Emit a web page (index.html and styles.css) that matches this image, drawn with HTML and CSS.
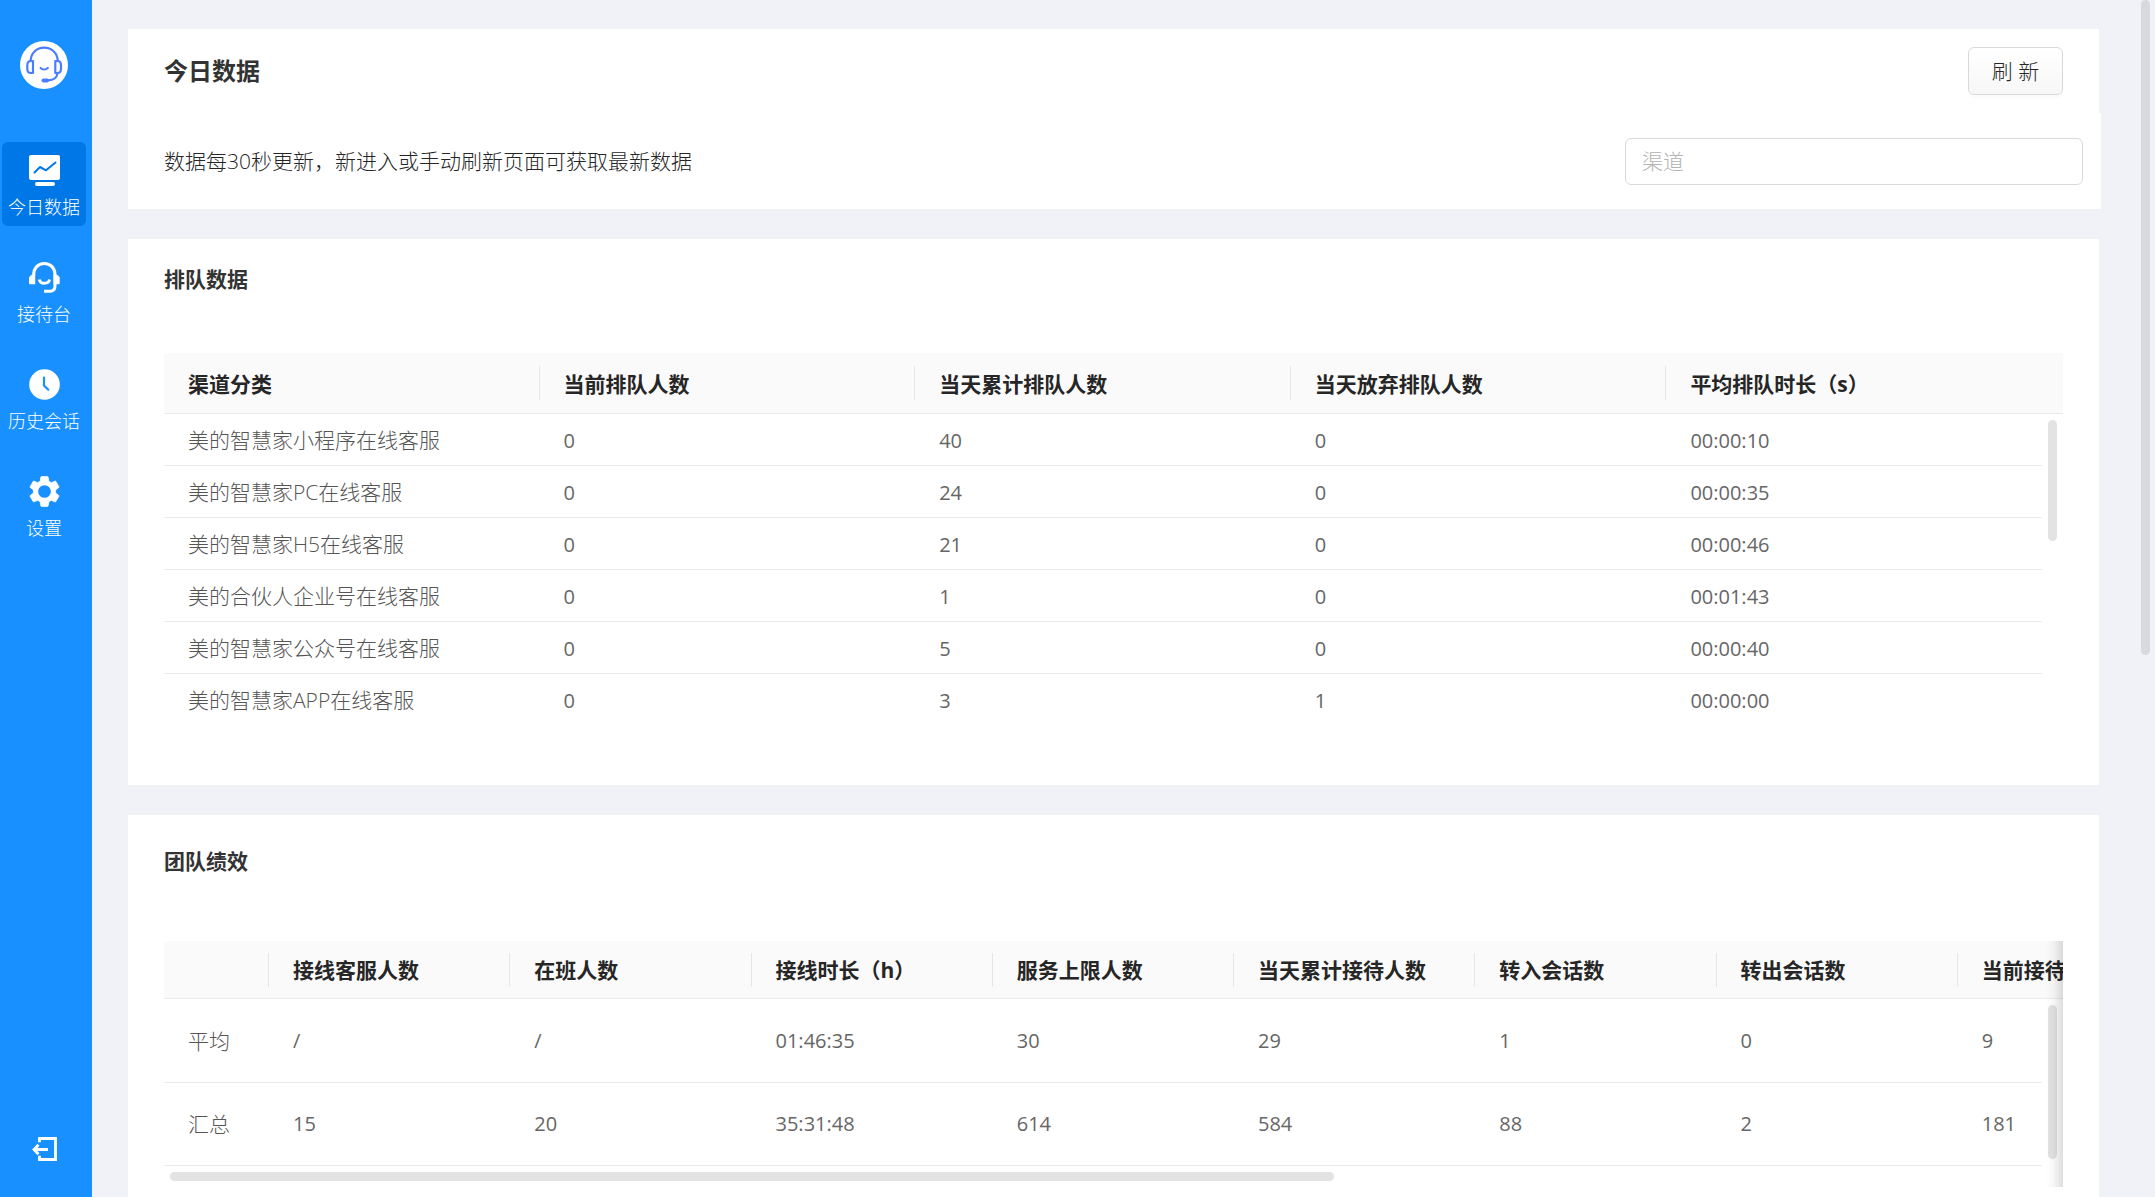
FILE: index.html
```html
<!DOCTYPE html>
<html lang="zh-CN">
<head>
<meta charset="utf-8">
<title>今日数据</title>
<link rel="stylesheet" href="styles.css">
</head>
<body>
<div class="app">
  <aside class="sidebar">
    <svg class="logo" viewBox="0 0 48 48" aria-hidden="true">
      <circle cx="24" cy="24" r="24" fill="#fff"/>
      <g fill="none" stroke="#4a7dff" stroke-width="2.2" stroke-linecap="round" stroke-linejoin="round">
        <path d="M10.700 19.500C11 12 16.800 6.700 24.200 6.700s13.200 5.300 13.500 12.800"/>
        <path d="M13 20h-2c-2.400 0-3.700 1.900-3.700 4.200v3.500c0 2.400 1.300 4.300 3.700 4.300h2z"/>
        <path d="M35.300 20h2c2.400 0 3.700 1.900 3.700 4.200v3.500c0 2.400-1.300 4.300-3.700 4.300h-2z"/>
        <path d="M37.300 32c0 4.800-4 7.200-9 7.400"/>
        <path d="M20.600 27c2 2 5.200 2 7.200 0"/>
        <path d="M23.500 39.400h3.500" stroke-width="4"/>
      </g>
    </svg>
    <nav class="menu">
      <a class="menu-item active" href="#today">
        <svg class="menu-icon" viewBox="0 0 31 31" aria-hidden="true">
          <rect width="31" height="25" rx="2" fill="#fff"/>
          <rect x="6" y="27" width="20" height="4" rx="2" fill="#fff"/>
          <path d="M5.500 17.500l5.500-5.500 6 3.300 9.500-7.800" fill="none" stroke="#0077e6" stroke-width="2" stroke-linecap="round" stroke-linejoin="round"/>
        </svg>
        <span>今日数据</span>
      </a>
      <a class="menu-item" href="#desk">
        <svg class="menu-icon" viewBox="0 0 31 31" aria-hidden="true">
          <g fill="none" stroke="#fff" stroke-width="3">
            <path d="M4.700 14v-1.200C4.700 6 9 1.500 15.300 1.500S26 6 26 12.800V24c0 3.500-1.800 5.200-5 5.200h-6"/>
            <path d="M10.300 17.500c1 5 9.200 5 10.300 0"/>
          </g>
          <path d="M6.200 12.700v9.500H1.500C.5 22.200 0 21.700 0 20.700v-5.500l2.500-2.500zM24.500 12.700v9.500h4.700c1 0 1.500-.5 1.500-1.500v-5.500l-2.500-2.500z" fill="#fff"/>
        </svg>
        <span>接待台</span>
      </a>
      <a class="menu-item" href="#history">
        <svg class="menu-icon" viewBox="0 0 31 31" aria-hidden="true">
          <circle cx="15.500" cy="15.500" r="15.300" fill="#fff"/>
          <path d="M15 8.700V16.500l4.300 4.200" fill="none" stroke="#1890ff" stroke-width="2.200" stroke-linecap="round"/>
        </svg>
        <span>历史会话</span>
      </a>
      <a class="menu-item" href="#settings">
        <svg class="menu-icon" viewBox="2 2 20 20" aria-hidden="true">
          <path fill="#fff" stroke="#fff" stroke-width=".5" d="M19.140 12.940c.04-.3.06-.61.06-.94 0-.32-.02-.64-.07-.94l2.030-1.580c.18-.14.23-.41.12-.61l-1.920-3.320c-.12-.22-.37-.29-.59-.22l-2.390.96c-.5-.38-1.030-.7-1.620-.94l-.36-2.540c-.04-.24-.24-.41-.48-.41h-3.840c-.24 0-.43.17-.47.41l-.36 2.540c-.59.24-1.130.57-1.620.94l-2.390-.96c-.22-.08-.47 0-.59.22L2.740 8.870c-.12.21-.08.47.12.61l2.030 1.580c-.05.3-.09.63-.09.94s.02.64.07.94l-2.030 1.580c-.18.14-.23.41-.12.61l1.920 3.320c.12.22.37.29.59.22l2.390-.96c.5.38 1.030.7 1.620.94l.36 2.540c.05.24.24.41.48.41h3.840c.24 0 .44-.17.47-.41l.36-2.540c.59-.24 1.130-.56 1.620-.94l2.390.96c.22.08.47 0 .59-.22l1.920-3.320c.12-.22.07-.47-.12-.61z"/>
          <circle cx="12" cy="12" r="4.100" fill="#1890ff"/>
        </svg>
        <span>设置</span>
      </a>
    </nav>
    <button class="logout" type="button" aria-label="退出">
      <svg viewBox="0 0 25 24" aria-hidden="true">
        <path d="M7.500 5.300V1.500h16v21h-16v-3.800M16 12.500H2.500M6.500 7.800L2 12.500l4.500 4.700" fill="none" stroke="#fff" stroke-width="2.800"/>
      </svg>
    </button>
  </aside>

  <main class="content">
    <section class="card">
      <header class="page-head">
        <h1>今日数据</h1>
        <button class="refresh" type="button">刷 新</button>
      </header>
      <div class="filter">
        <label for="channel">数据每30秒更新，新进入或手动刷新页面可获取最新数据</label>
        <input id="channel" type="text" placeholder="渠道">
      </div>
    </section>

    <section class="card queue">
      <h2>排队数据</h2>
      <div class="table-box queue-box">
        <table class="queue-table">
          <colgroup><col><col><col><col><col><col class="bar-col"></colgroup>
          <thead>
            <tr><th>渠道分类</th><th>当前排队人数</th><th>当天累计排队人数</th><th>当天放弃排队人数</th><th>平均排队时长（s）</th><th></th></tr>
          </thead>
          <tbody>
            <tr><td>美的智慧家小程序在线客服</td><td class="num">0</td><td class="num">40</td><td class="num">0</td><td class="num">00:00:10</td></tr>
            <tr><td>美的智慧家PC在线客服</td><td class="num">0</td><td class="num">24</td><td class="num">0</td><td class="num">00:00:35</td></tr>
            <tr><td>美的智慧家H5在线客服</td><td class="num">0</td><td class="num">21</td><td class="num">0</td><td class="num">00:00:46</td></tr>
            <tr><td>美的合伙人企业号在线客服</td><td class="num">0</td><td class="num">1</td><td class="num">0</td><td class="num">00:01:43</td></tr>
            <tr><td>美的智慧家公众号在线客服</td><td class="num">0</td><td class="num">5</td><td class="num">0</td><td class="num">00:00:40</td></tr>
            <tr><td>美的智慧家APP在线客服</td><td class="num">0</td><td class="num">3</td><td class="num">1</td><td class="num">00:00:00</td></tr>
          </tbody>
        </table>
        <div class="thumb queue-thumb"></div>
      </div>
    </section>

    <section class="card team">
      <h2>团队绩效</h2>
      <div class="table-box team-box">
        <table class="team-table">
          <colgroup><col class="name-col"><col><col><col><col><col><col><col><col></colgroup>
          <thead>
            <tr><th></th><th>接线客服人数</th><th>在班人数</th><th>接线时长（h）</th><th>服务上限人数</th><th>当天累计接待人数</th><th>转入会话数</th><th>转出会话数</th><th>当前接待人数</th></tr>
          </thead>
          <tbody>
            <tr><td>平均</td><td class="num">/</td><td class="num">/</td><td class="num">01:46:35</td><td class="num">30</td><td class="num">29</td><td class="num">1</td><td class="num">0</td><td class="num">9</td></tr>
            <tr><td>汇总</td><td class="num">15</td><td class="num">20</td><td class="num">35:31:48</td><td class="num">614</td><td class="num">584</td><td class="num">88</td><td class="num">2</td><td class="num">181</td></tr>
          </tbody>
        </table>
        <div class="bar-gutter"><div class="thumb team-thumb"></div></div>
        <div class="thumb team-thumb-x"></div>
        <div class="edge-shadow"></div>
      </div>
    </section>
  </main>
  <div class="page-thumb"></div>
</div>
</body>
</html>
```
FILE: styles.css
```css
* { box-sizing: border-box; }

body {
  margin: 0;
  background: #f0f2f7;
  color: #262626;
  font: 300 21px/32px "Open Sans", "Noto Sans CJK SC", sans-serif;
}

.app {
  position: relative;
  display: flex;
  height: 100vh;
  overflow: hidden;
}

/* Sidebar */
.sidebar {
  flex: 0 0 92px;
  display: flex;
  flex-direction: column;
  align-items: center;
  padding: 41px 6px 36px 2px;
  background: #1890ff;
}

.logo { width: 48px; height: 48px; }

.menu {
  display: flex;
  flex-direction: column;
  gap: 23px;
  align-self: stretch;
  margin-top: 53px;
}

.menu-item {
  display: flex;
  flex-direction: column;
  align-items: center;
  gap: 9px;
  height: 84px;
  padding-top: 13px;
  border-radius: 6px;
  color: #fff;
  font-size: 18px;
  line-height: 24px;
  text-decoration: none;
  white-space: nowrap;
}

.menu-item.active { background: #0077e6; }

.menu-icon { width: 31px; height: 31px; }

.logout {
  margin-top: auto;
  padding: 0;
  border: 0;
  background: none;
}

.logout svg { display: block; width: 25px; height: 24px; }

/* Content */
.content {
  flex: 1;
  min-width: 0;
  height: 100vh;
  overflow: hidden;
  padding: 29px 56px 30px 36px;
}

.card { background: #fff; margin-bottom: 30px; }

h1, h2 { margin: 0; color: #333; font-weight: 700; }
h1 { font-size: 24px; }
h2 { font-size: 21px; }

.page-head {
  display: flex;
  align-items: center;
  justify-content: space-between;
  height: 84px;
  padding: 0 36px;
}

.refresh {
  width: 95px;
  height: 48px;
  padding: 0;
  border: 1px solid #d9d9d9;
  border-radius: 6px;
  background: linear-gradient(#fff, #f7f7f7);
  box-shadow: 0 3px 2px rgba(0, 0, 0, .02);
  color: #262626;
  font: inherit;
}

.filter {
  display: flex;
  align-items: center;
  justify-content: space-between;
  height: 96px;
  margin-right: -2px;
  padding: 0 18px 0 36px;
  background: #fff;
}

.filter input {
  width: 458px;
  height: 47px;
  padding: 0 16px;
  border: 1px solid #d9d9d9;
  border-radius: 6px;
  font: inherit;
}

.filter input::placeholder { color: #b3b3b3; opacity: 1; }

/* Tables */
.queue { padding: 24px 36px 59px; }
.queue h2 { margin-bottom: 58px; }
.team { padding: 30px 36px 60px; }
.team h2 { margin-bottom: 64px; }

.table-box { position: relative; overflow: hidden; }
.queue-box { height: 373px; }
.team-box { height: 246px; }

table {
  table-layout: fixed;
  border-spacing: 0;
  width: 100%;
}

.team-table { width: 2035px; }
.name-col { width: 105px; }
.bar-col { width: 21px; }

th, td {
  padding: 0 24px;
  border-bottom: 1px solid #ebebeb;
  text-align: left;
  white-space: nowrap;
}

th {
  position: relative;
  height: 61px;
  background: #fafafa;
  color: #262626;
  font-weight: 700;
}

th:first-child { border-top-left-radius: 3px; }

th:not(:last-child)::after {
  content: "";
  position: absolute;
  top: 13px;
  right: 0;
  width: 1px;
  height: 34px;
  background: #e6e6e6;
}

.queue-table th { padding-top: 2px; }
.queue-table th:nth-last-child(2)::after { content: none; }
.queue-table th:last-child { padding: 0; }
.queue-table tr:last-child td { border-bottom: 0; }

.team-table th { height: 58px; }
.team-table th::after { top: 12px; }

td { height: 52px; color: #555; }
.queue-table .num { padding-top: 2px; }
.team-table td { height: 84px; }
.team-table tr:last-child td { height: 83px; }

.num { color: #666; font-size: 20px; font-weight: 400; }

/* Scroll indicators */
.thumb {
  position: absolute;
  width: 9px;
  border-radius: 5px;
  background: #e3e3e3;
}

.queue-thumb { top: 67px; right: 6px; height: 121px; }

.bar-gutter {
  position: absolute;
  top: 58px;
  right: 0;
  bottom: 0;
  width: 21px;
  background: #fff;
}

.team-thumb { top: 6px; right: 6px; height: 154px; }

.team-thumb-x {
  left: 6px;
  bottom: 6px;
  width: 61.3%;
  height: 9px;
}

.edge-shadow {
  position: absolute;
  top: 0;
  right: 0;
  bottom: 0;
  width: 18px;
  background: linear-gradient(to right, rgba(0, 0, 0, 0), rgba(0, 0, 0, .03) 45%, rgba(0, 0, 0, .13));
}

.page-thumb {
  position: absolute;
  top: 0;
  right: 5px;
  width: 9px;
  height: 655px;
  border-radius: 5px;
  background: #d7d9de;
}
```
